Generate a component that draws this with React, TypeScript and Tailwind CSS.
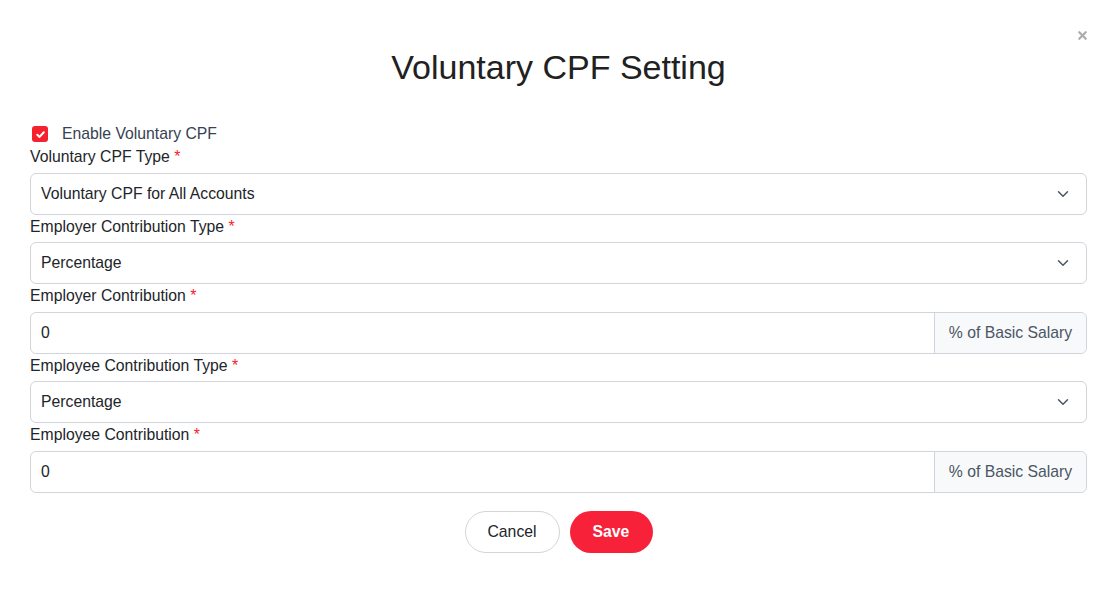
import { ChevronDown, X } from "lucide-react";

function Label({ text }: { text: string }) {
  return (
    <label className="mt-[2px] mb-[5.5px] block text-[15.75px] leading-[20px] text-[#212529]">
      {text} <span className="text-[#f5222d]">*</span>
    </label>
  );
}

function SelectBox({ value }: { value: string }) {
  return (
    <div className="flex h-[42px] items-center justify-between rounded-[6px] border border-[#d1d5db] bg-white pl-[10px] pr-[14px] text-[15.75px] text-[#212529]">
      <span>{value}</span>
      <ChevronDown className="h-[18px] w-[18px] text-[#4b5563]" strokeWidth={2} />
    </div>
  );
}

function AddonInput({ value }: { value: string }) {
  return (
    <div className="flex h-[42px] rounded-[6px] border border-[#d1d5db] bg-white text-[15.75px]">
      <div className="flex flex-1 items-center pl-[10px] text-[#212529]">{value}</div>
      <div className="flex w-[152px] items-center justify-center rounded-r-[6px] border-l border-[#d1d5db] bg-[#f8f9fa] text-[#4b5563]">
        % of Basic Salary
      </div>
    </div>
  );
}

export default function App() {
  return (
    <div className="relative min-h-screen bg-white px-[30px] pt-[45px]" style={{ fontFamily: '"Liberation Sans", Arial, sans-serif' }}>
      <button className="absolute right-[28px] top-[29px] text-[#ababab]">
        <X className="h-[13px] w-[13px]" strokeWidth={4} />
      </button>
      <h1 className="text-center text-[34px] leading-[44px] text-[#212121]">Voluntary CPF Setting</h1>

      <div className="mt-[35px] flex items-center gap-[14px]">
        <span className="ml-[2px] flex h-[16px] w-[16px] items-center justify-center rounded-[3px] bg-[#f5222d]">
          <svg viewBox="0 0 12 12" className="h-[11px] w-[11px]" fill="none" stroke="white" strokeWidth="2.2" strokeLinecap="round" strokeLinejoin="round">
            <path d="M2.5 6.3 5 8.6 9.6 3.6" />
          </svg>
        </span>
        <span className="text-[15.75px] leading-[20px] text-[#374151]">Enable Voluntary CPF</span>
      </div>

      <div className="mt-[1px] flex flex-col">
        <Label text="Voluntary CPF Type" />
        <SelectBox value="Voluntary CPF for All Accounts" />
        <Label text="Employer Contribution Type" />
        <SelectBox value="Percentage" />
        <Label text="Employer Contribution" />
        <AddonInput value="0" />
        <Label text="Employee Contribution Type" />
        <SelectBox value="Percentage" />
        <Label text="Employee Contribution" />
        <AddonInput value="0" />
      </div>

      <div className="mt-[18px] flex justify-center gap-[10px]">
        <button className="h-[42px] w-[95px] rounded-full border border-[#d1d5db] bg-white text-[15.75px] text-[#212529]">Cancel</button>
        <button className="h-[42px] w-[83px] rounded-full bg-[#f8213a] text-[15.75px] font-bold text-white">Save</button>
      </div>
    </div>
  );
}
